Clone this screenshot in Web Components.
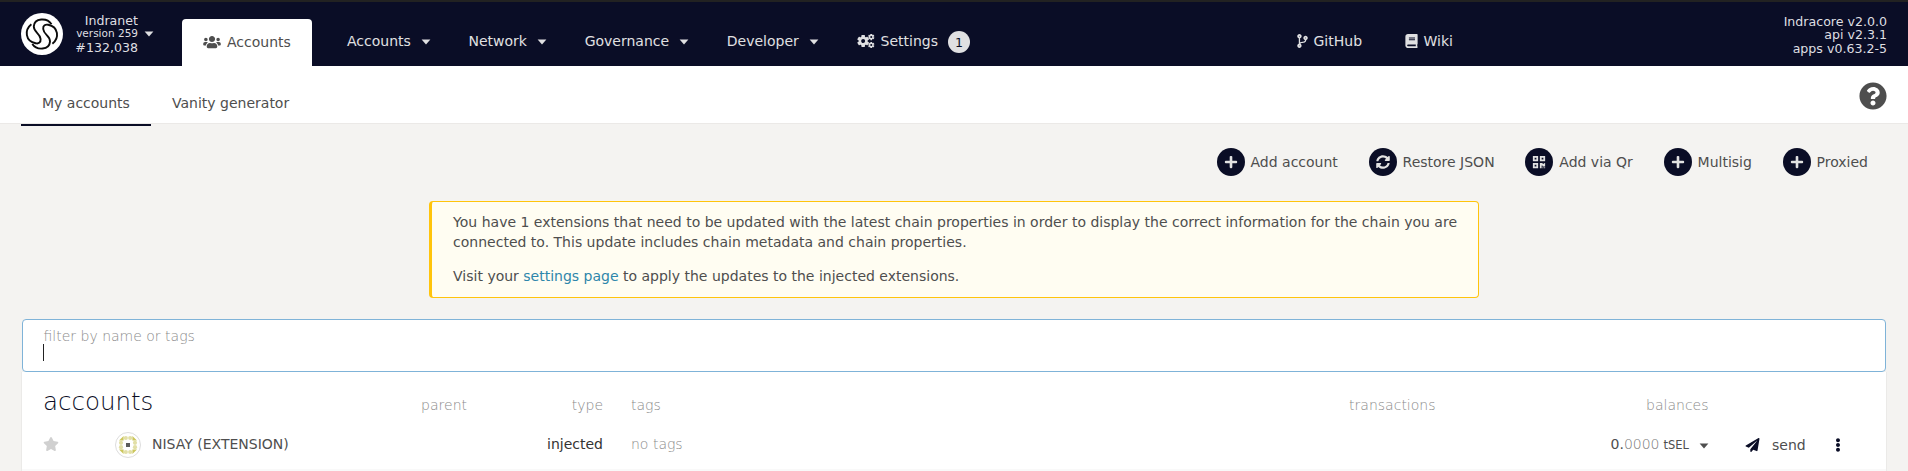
<!DOCTYPE html>
<html lang="en">
<head>
<meta charset="utf-8">
<title>Accounts</title>
<style>
html,body{margin:0;height:100%;overflow:hidden;background:#f4f3f1}
body{font:14px/20px "DejaVu Sans",sans-serif;color:#4e4e4e}
</style>
</head>
<body>
<indra-app></indra-app>
<script>
const define = (name, html) => customElements.define(name, class extends HTMLElement {
  constructor() {
    super();
    this.attachShadow({ mode: 'open' }).innerHTML = html;
  }
});

const ICONS = {
  users: ['0 0 640 512', 'M96 224c35.300 0 64-28.700 64-64s-28.700-64-64-64-64 28.700-64 64 28.700 64 64 64zm448 0c35.300 0 64-28.700 64-64s-28.700-64-64-64-64 28.700-64 64 28.700 64 64 64zm32 32h-64c-17.600 0-33.500 7.100-45.100 18.600 40.300 22.100 68.900 62 75.100 109.400h66c17.700 0 32-14.300 32-32v-32c0-35.300-28.700-64-64-64zm-256 0c61.900 0 112-50.100 112-112S381.900 32 320 32 208 82.100 208 144s50.100 112 112 112zm76.800 32h-8.300c-20.800 10-43.900 16-68.500 16s-47.600-6-68.500-16h-8.300C179.600 288 128 339.600 128 403.200V432c0 26.500 21.500 48 48 48h288c26.500 0 48-21.500 48-48v-28.800c0-63.600-51.600-115.200-115.200-115.200zm-223.700-13.400C161.500 263.100 145.600 256 128 256H64c-35.300 0-64 28.700-64 64v32c0 17.700 14.300 32 32 32h65.900c6.300-47.400 34.900-87.300 75.200-109.400z'],
  branch: ['0 0 384 512', 'M384 144c0-44.200-35.800-80-80-80s-80 35.800-80 80c0 36.400 24.300 67.100 57.500 76.800-.6 16.100-4.200 28.500-11 36.900-15.400 19.200-49.300 22.400-85.200 25.700-28.200 2.600-57.400 5.400-81.300 16.900v-144c32.500-10.200 56-40.500 56-76.300 0-44.200-35.800-80-80-80S0 35.800 0 80c0 35.800 23.500 66.100 56 76.300v199.300C23.500 365.900 0 396.200 0 432c0 44.200 35.800 80 80 80s80-35.800 80-80c0-34-21.200-63.100-51.200-74.600 3.100-5.200 7.800-9.800 14.900-13.400 16.200-8.200 40.400-10.400 66.100-12.800 42.200-3.900 90-8.400 118.200-43.400 14-17.400 21.100-39.800 21.600-67.900 31.600-10.800 54.400-40.700 54.400-75.900zM80 64c8.800 0 16 7.200 16 16s-7.200 16-16 16-16-7.200-16-16 7.200-16 16-16zm0 384c-8.800 0-16-7.200-16-16s7.200-16 16-16 16 7.200 16 16-7.200 16-16 16zm224-320c8.800 0 16 7.200 16 16s-7.200 16-16 16-16-7.200-16-16 7.200-16 16-16z'],
  book: ['0 0 448 512', 'M448 360V24c0-13.300-10.700-24-24-24H96C43 0 0 43 0 96v320c0 53 43 96 96 96h328c13.300 0 24-10.700 24-24v-16c0-7.500-3.500-14.300-8.900-18.700-4.200-15.400-4.200-59.300 0-74.700 5.400-4.300 8.900-11.100 8.900-18.600zM128 134c0-3.300 2.700-6 6-6h212c3.300 0 6 2.700 6 6v20c0 3.300-2.700 6-6 6H134c-3.300 0-6-2.700-6-6v-20zm0 64c0-3.300 2.700-6 6-6h212c3.300 0 6 2.700 6 6v20c0 3.300-2.700 6-6 6H134c-3.300 0-6-2.700-6-6v-20zm253.400 250H96c-17.700 0-32-14.300-32-32 0-17.600 14.400-32 32-32h285.400c-1.900 17.100-1.900 46.900 0 64z'],
  help: ['0 0 512 512', 'M504 256c0 136.997-111.043 248-248 248S8 392.997 8 256C8 119.083 119.043 8 256 8s248 111.083 248 248zM262.655 90c-54.497 0-89.255 22.957-116.549 63.758-3.536 5.286-2.353 12.415 2.715 16.258l34.699 26.310c5.205 3.947 12.621 3.008 16.665-2.122 17.864-22.658 30.113-35.797 57.303-35.797 20.429 0 45.698 13.148 45.698 32.958 0 14.976-12.363 22.667-32.534 33.976C247.128 238.528 216 254.941 216 296v4c0 6.627 5.373 12 12 12h56c6.627 0 12-5.373 12-12v-1.333c0-28.462 83.186-29.647 83.186-106.667 0-58.002-60.165-102-116.531-102zM256 338c-25.365 0-46 20.635-46 46 0 25.364 20.635 46 46 46s46-20.636 46-46c0-25.365-20.635-46-46-46z'],
  plus: ['0 0 448 512', 'M416 208H272V64c0-17.670-14.330-32-32-32h-32c-17.670 0-32 14.330-32 32v144H32c-17.670 0-32 14.330-32 32v32c0 17.670 14.330 32 32 32h144v144c0 17.670 14.330 32 32 32h32c17.670 0 32-14.330 32-32V304h144c17.670 0 32-14.330 32-32v-32c0-17.670-14.330-32-32-32z'],
  sync: ['0 0 512 512', 'M370.720 133.280C339.458 104.008 298.888 87.962 255.848 88c-77.458.068-144.328 53.178-162.791 126.850-1.344 5.363-6.122 9.150-11.651 9.150H24.103c-7.498 0-13.194-6.807-11.807-14.176C33.933 94.924 134.813 8 256 8c66.448 0 126.791 26.136 171.315 68.685L463.030 40.970C478.149 25.851 504 36.559 504 57.941V192c0 13.255-10.745 24-24 24H345.941c-21.382 0-32.090-25.851-16.971-40.971l41.750-41.749zM32 296h134.059c21.382 0 32.090 25.851 16.971 40.971l-41.750 41.750c31.262 29.273 71.835 45.319 114.876 45.280 77.418-.070 144.315-53.144 162.787-126.849 1.344-5.363 6.122-9.150 11.651-9.150h57.304c7.498 0 13.194 6.807 11.807 14.176C478.067 417.076 377.187 504 256 504c-66.448 0-126.791-26.136-171.315-68.685L48.970 471.030C33.851 486.149 8 475.441 8 454.059V320c0-13.255 10.745-24 24-24z'],
  qr: ['0 0 448 512', 'M0 224h192V32H0v192zM64 96h64v64H64V96zm192-64v192h192V32H256zm128 128h-64V96h64v64zM0 480h192V288H0v192zm64-128h64v64H64v-64zm352-64h32v128h-96v-32h-32v96h-64V288h96v32h64v-32zm0 160h32v32h-32v-32zm-64 0h32v32h-32v-32z'],
  star: ['0 0 576 512', 'M259.300 17.800L194 150.200 47.900 171.500c-26.200 3.800-36.700 36.100-17.700 54.600l105.700 103-25 145.500c-4.500 26.300 23.200 46 46.400 33.700L288 439.600l130.700 68.700c23.200 12.200 50.900-7.400 46.400-33.700l-25-145.500 105.700-103c19-18.500 8.500-50.800-17.700-54.600L382 150.200 316.700 17.800c-11.700-23.600-45.600-23.900-57.400 0z'],
  plane: ['0 0 512 512', 'M476 3.200L12.500 270.600c-18.100 10.400-15.800 35.600 2.200 43.200L121 358.400l287.300-253.200c5.500-4.900 13.300 2.600 8.600 8.300L176 407v80.500c0 23.600 28.500 32.900 42.500 15.800L282 426l124.600 52.200c14.200 6 30.400-2.900 33-18.200l72-432C515 7.800 493.300-6.800 476 3.200z'],
  dots: ['0 0 192 512', 'M96 184c39.800 0 72 32.200 72 72s-32.200 72-72 72-72-32.200-72-72 32.200-72 72-72zM24 80c0 39.800 32.200 72 72 72s72-32.200 72-72S135.800 8 96 8 24 40.200 24 80zm0 352c0 39.800 32.200 72 72 72s72-32.200 72-72-32.200-72-72-72-72 32.200-72 72z'],
  caret: ['0 0 10 6', 'M.6 .6h8.800L5 5.400z']
};

/* A ring with a hole and square teeth, used for the cogs glyph. */
const cog = (cx, cy, r, hole, teeth, tw) => {
  let s = `<circle cx="${cx}" cy="${cy}" r="${(r * .76 + hole) / 2}" fill="none" stroke="currentColor" stroke-width="${r * .76 - hole}"/>`;
  for (let i = 0; i < teeth; i++)
    s += `<rect x="${cx - tw / 2}" y="${cy - r}" width="${tw}" height="${r * .4}" rx="${tw * .15}" fill="currentColor" transform="rotate(${i * 360 / teeth} ${cx} ${cy})"/>`;
  return s;
};

customElements.define('ui-icon', class extends HTMLElement {
  constructor() { super(); this.attachShadow({ mode: 'open' }); }
  connectedCallback() {
    const n = this.getAttribute('name');
    const css = '<style>:host{display:block;flex:none}svg{display:block;width:100%;height:100%}</style>';
    if (n === 'cogs') {
      this.shadowRoot.innerHTML = css + `<svg viewBox="0 0 640 512">${cog(216, 256, 216, 72, 6, 130)}${cog(512, 108, 116, 38, 6, 70)}${cog(512, 404, 116, 38, 6, 70)}</svg>`;
      return;
    }
    const [box, d] = ICONS[n];
    this.shadowRoot.innerHTML = css + `<svg viewBox="${box}"><path fill="currentColor" fill-rule="evenodd" d="${d}"/></svg>`;
  }
});

define('chain-logo', `<style>:host{display:block;width:42px;height:42px;flex:none}svg{display:block}</style>
<svg width="42" height="42" viewBox="0 0 42 42"><circle cx="21" cy="21" r="21" fill="#fff"/>
<g fill="none" stroke="#0b0b0b" stroke-width="1.900">
<path d="M30.500 11.200C26 4.200 13.400 5 12.800 13.400C12.600 19.400 19 20 19.600 26C20 29.800 17.200 31 14.600 30.200C4.200 28 3.200 17 10.400 11.200"/>
<path d="M11.300 31C15.800 37.800 28.400 37 29 28.600C29.200 22.600 22.800 22 22.200 16C21.800 12.200 24.600 11.200 27.200 11.800C37.600 14 38.600 25 31.400 30.800"/>
</g></svg>`);

define('chain-info', `<style>
:host{display:flex;align-items:flex-start;width:161px;color:#dfdfe2}
.t{width:75px;text-align:right;font-size:12.600px;margin-top:1px}
.t div{height:13px;line-height:14px;white-space:nowrap}.t .v{font-size:10.500px;height:14px;line-height:12px}
ui-icon{width:10px;height:6px;margin-left:6px;margin-top:18px}
</style><chain-logo></chain-logo><div class="t"><div>Indranet</div><div class="v">version 259</div><div>#132,038</div></div><ui-icon name="caret"></ui-icon>`);

define('active-tab', `<style>
:host{display:flex;box-sizing:border-box;width:130px;height:47px;background:#fff;border-radius:4px 4px 0 0;align-items:center;padding:0 0 1px 21px;color:#4e4e4e}
ui-icon{width:18px;height:14px;margin-right:6px}
</style><ui-icon name="users"></ui-icon><slot></slot>`);

define('nav-item', `<style>
:host{display:flex;align-items:center;height:20px;white-space:nowrap;color:#e0e0e2}
</style><slot name="icon"></slot><slot></slot><slot name="end"></slot>`);

define('top-bar', `<style>
:host{display:flex;box-sizing:border-box;height:66px;background:#0a0d26;border-top:2px solid #222;padding:0 21px;align-items:flex-start}
chain-info{margin-top:11px;height:42px}
active-tab{margin-top:17px}
nav,.links{display:flex;margin-top:29px}
nav{margin-left:35px;width:949.500px;gap:37.700px}
ui-icon.c{width:10px;height:6px;margin-left:10px;margin-top:1px}
ui-icon.cogs{width:18px;height:14px;margin-right:6px}
.badge{width:22px;height:22px;border-radius:50%;background:#e0e0e2;color:#0a0d26;font-size:12.600px;line-height:23px;text-align:center;margin:2px 0 0 10px}
.br{width:11px;height:14px;margin-right:6px}.bk{width:13px;height:14px;margin-right:6px}
.links{gap:42.500px}
.ver{margin-left:auto;margin-top:13px;color:#dfdfe2;font-size:12.600px;text-align:right}
.ver div{height:14px;line-height:14px}.ver div:nth-child(2){height:13px;line-height:12px}
</style>
<chain-info></chain-info><active-tab>Accounts</active-tab>
<nav>
<nav-item>Accounts<ui-icon class="c" slot="end" name="caret"></ui-icon></nav-item>
<nav-item>Network<ui-icon class="c" slot="end" name="caret"></ui-icon></nav-item>
<nav-item>Governance<ui-icon class="c" slot="end" name="caret"></ui-icon></nav-item>
<nav-item>Developer<ui-icon class="c" slot="end" name="caret"></ui-icon></nav-item>
<nav-item><ui-icon class="cogs" slot="icon" name="cogs"></ui-icon>Settings<div class="badge" slot="end">1</div></nav-item>
</nav>
<div class="links">
<nav-item><ui-icon class="br" slot="icon" name="branch"></ui-icon>GitHub</nav-item>
<nav-item><ui-icon class="bk" slot="icon" name="book"></ui-icon>Wiki</nav-item>
</div>
<div class="ver"><div>Indracore v2.0.0</div><div>api v2.3.1</div><div>apps v0.63.2-5</div></div>`);

define('sub-tabs', `<style>
:host{display:flex;box-sizing:border-box;height:58px;background:#fff;border-bottom:1px solid #ebe9e7;padding:0 21px}
div{box-sizing:border-box;height:60px;padding:27px 21px 0;white-space:nowrap}
.on{width:130px;border-bottom:2px solid #0a0d26}
ui-icon{width:28px;height:28px;margin:16px 0 0 auto}
</style><div class="on">My accounts</div><div>Vanity generator</div><ui-icon name="help"></ui-icon>`);

define('round-button', `<style>
:host{display:flex;align-items:center;white-space:nowrap}
span{display:flex;align-items:center;justify-content:center;width:28px;height:28px;border-radius:50%;background:#0a0d26;color:#e2e2e2;margin-right:6px}
::slotted(ui-icon){width:14px;height:14px}
</style><span><slot name="icon"></slot></span><slot></slot>`);

define('action-row', `<style>
:host{display:flex;justify-content:flex-end;gap:30.700px;padding:24px 40px 0 0;height:28px}
</style>
<round-button><ui-icon slot="icon" name="plus"></ui-icon>Add account</round-button>
<round-button><ui-icon slot="icon" name="sync"></ui-icon>Restore JSON</round-button>
<round-button><ui-icon slot="icon" name="qr"></ui-icon>Add via Qr</round-button>
<round-button><ui-icon slot="icon" name="plus"></ui-icon>Multisig</round-button>
<round-button><ui-icon slot="icon" name="plus"></ui-icon>Proxied</round-button>`);

define('warn-box', `<style>
:host{display:block;box-sizing:border-box;width:55%;height:97px;margin:25px auto 0;background:#fffdf2;border:1px solid #ffc40c;border-left-width:3px;border-radius:4px;padding:10px 20px 0 20.800px}
p{margin:0 0 14px}a{color:#2e86ab}
</style><p>You have 1 extensions that need to be updated with the latest chain properties in order to display the correct information for the chain you are connected to. This update includes chain metadata and chain properties.</p>
<p>Visit your <a>settings page</a> to apply the updates to the injected extensions.</p>`);

define('filter-input', `<style>
:host{display:block;box-sizing:border-box;height:53px;margin:21px 22px 0 22px;background:#fff;border:1px solid #7fb3d8;border-radius:4px;padding:6px 0 0 20px}
label{display:block;padding-left:.5px;height:18px;line-height:20px;font-weight:200;color:#8b8b8b}
i{display:block;width:1px;height:17px;background:#222}
</style><label>filter by name or tags</label><i></i>`);

define('ident-icon', `<style>:host{display:block;width:26px;height:26px}svg{display:block}</style>
<svg width="26" height="26" viewBox="0 0 26 26"><circle cx="13" cy="13" r="12.500" fill="#fff" stroke="#ddd"/>
<path fill="#cbc65c" d="M4 8.600L8.600 4v4.600zM22 8.600L17.400 4v4.600zM4 17.400L8.600 22v-4.600zM22 17.400L17.400 22v-4.600z"/>
<g fill="#e2dfa6"><circle cx="10.800" cy="6" r="2.100"/><circle cx="15.200" cy="6" r="2.100"/><circle cx="10.800" cy="20" r="2.100"/><circle cx="15.200" cy="20" r="2.100"/><circle cx="6" cy="10.800" r="2.100"/><circle cx="6" cy="15.200" r="2.100"/><circle cx="20" cy="10.800" r="2.100"/><circle cx="20" cy="15.200" r="2.100"/></g>
<rect x="11" y="11" width="4" height="4" fill="#5c5c5c"/></svg>`);

define('accounts-table', `<style>
:host{display:block;box-sizing:border-box;height:99px;margin:0 21px;background:#fff;border:solid #ebeae8;border-width:0 1px}
.r{display:grid;grid-template-columns:445px 136px 28px 804.500px 273px 1fr;white-space:nowrap}
.h{height:50px;padding-top:16px;box-sizing:border-box;color:#8b8b8b;font-weight:200;line-height:34px}
.b{height:49px;padding-bottom:1px;border-bottom:2px solid #f9f9f9;align-items:center;box-sizing:border-box}
h1{margin:0;font-size:24.500px;font-weight:200;line-height:28px;color:#0a0d26;padding-left:21px}
.s{display:flex;justify-content:space-between}
.e{text-align:right;justify-self:end}
.acc{display:flex;align-items:center;height:26px}
.acc span{margin-top:-3px}
.star{width:16px;height:14px;margin-left:21px;margin-top:-2px;color:#d0d0d0}
ident-icon{margin:0 11px 0 56px}
.type{color:#333;margin-top:-3px}
.l{font-weight:200;color:#8b8b8b;margin-top:-3px}
.bal{display:flex;align-items:center;justify-self:end;margin:-3px -.5px 0 0}
.bal ui-icon{width:10px;height:6px;margin:4px 0 0 10px}
.bal b{font-weight:200;color:#777}.bal small{font-size:11.500px;margin:2px 0 0 4px}
.act{display:flex;align-items:center;margin-top:-1px}
.pl{width:15px;height:14px;margin-left:36.500px;color:#0a0d26}
.dt{width:6px;height:14px;margin-left:29px;color:#0a0d26}
.act span{margin:0 0 0 12px}
</style>
<div class="r h">
<div class="s"><h1>accounts</h1><span>parent</span></div><div class="e">type</div><div></div>
<div class="s"><span>tags</span><span>transactions</span></div><div class="e">balances</div><div></div></div>
<div class="r b">
<div class="acc"><ui-icon class="star" name="star"></ui-icon><ident-icon></ident-icon><span>NISAY (EXTENSION)</span></div>
<div class="e type">injected</div><div></div><div class="l">no tags</div>
<div class="bal"><span>0.</span><b>0000</b><small>tSEL</small><ui-icon name="caret"></ui-icon></div>
<div class="act"><ui-icon class="pl" name="plane"></ui-icon><span>send</span><ui-icon class="dt" name="dots"></ui-icon></div></div>`);

define('indra-app', `<style>:host{display:block;height:471px;overflow:hidden}</style>
<top-bar></top-bar><sub-tabs></sub-tabs><action-row></action-row><warn-box></warn-box><filter-input></filter-input><accounts-table></accounts-table>`);
</script>
</body>
</html>
